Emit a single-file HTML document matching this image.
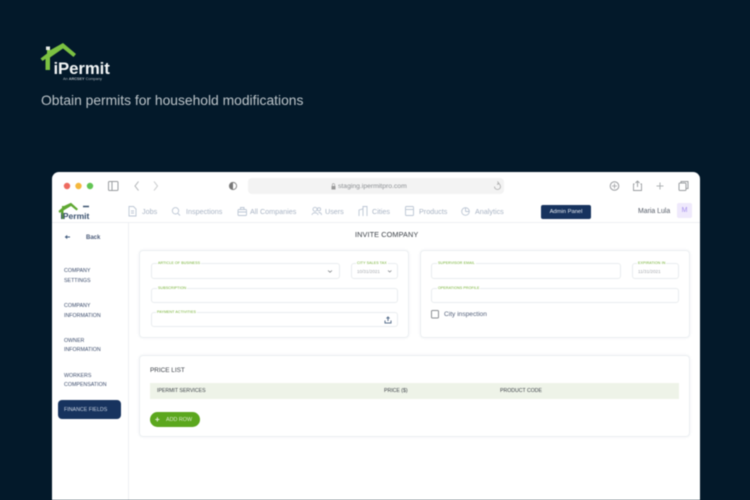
<!DOCTYPE html>
<html><head><meta charset="utf-8">
<style>
html,body{margin:0;padding:0}
body{width:750px;height:500px;overflow:hidden;background:#03192a;position:relative;font-family:"Liberation Sans",sans-serif}
.a{position:absolute;white-space:nowrap}
#win{position:absolute;left:52px;top:172px;width:648px;height:328px;background:#fff;border-radius:7px 7px 0 0;overflow:hidden}
#blur{position:absolute;left:0;top:0;width:750px;height:500px;filter:blur(.6px)}
.card{position:absolute;background:#fff;border:1px solid #eceff2;border-radius:4px;box-shadow:0 0 3px rgba(40,60,90,.06);box-sizing:border-box}
.f{position:absolute;box-sizing:border-box;border:1px solid #e9ecef;border-radius:3px;background:#fff}
.l{position:absolute;font-size:3.6px;line-height:4px;color:#6fae2c;background:#fff;padding:0 1px;white-space:nowrap;letter-spacing:.1px}
.n{position:absolute;font-size:7.2px;line-height:9px;color:#a9b4c4;white-space:nowrap}
.s{position:absolute;font-size:5.300px;line-height:6px;color:#3c4c6c;white-space:nowrap}
.v{position:absolute;font-size:4.600px;line-height:6px;color:#a5a9ae;white-space:nowrap}
.t{position:absolute;font-size:5.200px;line-height:6px;color:#3c4148;white-space:nowrap}
svg{position:absolute;overflow:visible}
</style></head><body>
<div id="blur">
<svg style="left:0;top:0" width="750" height="500">
<path d="M40.500 58.500 L47 53.500 L47 50 L50.500 50 L63 43 L76 54 L73.500 57 L63 48.500 L50 57.500 L50 70 L45.500 70 L45.500 59 L42.500 61 Z" fill="#7cc142"/>
<rect x="46" y="46.500" width="4" height="3.500" fill="#e8ece8"/>
</svg>
<div class="a" style="left:53.500px;top:57.500px;font-size:16.800px;line-height:21px;font-weight:700;color:#f2f5f5;letter-spacing:-.1px">iPermit</div>
<div class="a" style="left:63px;top:77px;font-size:3.800px;line-height:5px;color:#aeb6bb">An <b>ARCSEY</b> Company</div>
<div class="a" style="left:41px;top:92px;font-size:13.850px;line-height:16px;color:#bcc4c9">Obtain permits for household modifications</div>

<div id="win"></div>
<!-- toolbar -->
<svg style="left:0;top:0" width="750" height="500" fill="none">
<circle cx="67" cy="186" r="3.200" fill="#ee6a5f"/><circle cx="78.500" cy="186" r="3.200" fill="#f5b83d"/><circle cx="90" cy="186" r="3.200" fill="#62c554"/>
<rect x="108.500" y="181.500" width="9.500" height="9" rx="1" stroke="#9a9d a0" style="stroke:#9a9da0"/><path d="M112 182v8" stroke="#9a9da0"/>
<path d="M138.500 181.500 L135 186 L138.500 190.500" stroke="#b0b3b6"/><path d="M154 181.500 L157.500 186 L154 190.500" stroke="#c8cacc"/>
<circle cx="233" cy="186" r="3.600" stroke="#888"/><path d="M233 182.400a3.600 3.600 0 0 0 0 7.200z" fill="#777"/>
<rect x="248" y="178" width="256" height="16" rx="4" fill="#f3f3f3"/>
<path d="M494.500 186.500a3 3 0 1 0 3-3M497.500 181.500l1.500 2-2 1" stroke="#aaa" stroke-width=".8"/>
<rect x="331.500" y="186" width="4" height="3.500" fill="#999"/><path d="M332.300 186v-1.200a1.200 1.200 0 0 1 2.400 0v1.200" stroke="#999" stroke-width=".6"/>
<circle cx="614.500" cy="186" r="4.300" stroke="#9a9da0"/><path d="M614.500 183.500v5M612 186h5" stroke="#9a9da0" stroke-width=".8"/>
<path d="M634.500 184h-1v6.500h8V184h-1M637.500 187v-6M635.500 183l2-2 2 2" stroke="#9a9da0" stroke-width=".9"/>
<path d="M660 182.500v7M656.500 186h7" stroke="#b0b3b6"/>
<rect x="679" y="183" width="7" height="7.500" rx="1" stroke="#9a9da0"/><path d="M681 183v-1.500h7v7h-2" stroke="#9a9da0"/>
<!-- nav line -->
<path d="M52 222.500H700" stroke="#eef0f3"/>
<path d="M128.500 223V500" stroke="#eef0f3"/>
<!-- nav logo -->
<path d="M58.500 211 L62 208 L62 206 L64 206 L71 202.800 L78 209 L76.500 210.500 L71 206 L63.500 210.500 L63.500 219 L61 219 L61 212 L59.500 213 Z" fill="#5fa832"/>
<path d="M83 206.500h6" stroke="#39506e" stroke-width="1.500"/>
<!-- nav icons -->
<g stroke="#bcc6d4" stroke-width=".9">
<path d="M129 206.500h4.500l2.500 2.500v7h-7z"/><path d="M131 211h3M131 213h3"/>
<circle cx="175.500" cy="210.800" r="3.200"/><path d="M178 213.500l2 2"/>
<rect x="238" y="209.500" width="8.500" height="6" rx="1"/><path d="M240.500 209.500v-2h3.500v2M238 212h8.500"/>
<circle cx="315" cy="209.300" r="2"/><circle cx="319" cy="209.300" r="1.600"/><path d="M312 215c0-3 6-3 6 0M318.500 212.500c2 0 3 1 3 2.500"/>
<path d="M359 216v-6l4-1v7M363 216v-9.500h4v9.500"/>
<rect x="405.500" y="206.500" width="8" height="9" rx="1"/><path d="M405.500 209.500h8"/>
<circle cx="465.500" cy="211.500" r="3.800"/><path d="M465.500 211.500h4M465.500 207.700v3.800"/>
</g>
<!-- back arrow -->
<path d="M70 237h-4.500M67.200 235.500l-1.700 1.500 1.700 1.500" stroke="#3f5a7d"/>
</svg>

<div class="a" style="left:338px;top:182.500px;font-size:6.800px;line-height:8px;color:#8b8e92">staging.ipermitpro.com</div>

<div class="a" style="left:60.500px;top:211px;font-size:8.500px;line-height:10px;font-weight:700;color:#39506e">iPermit</div>
<div class="n" style="left:142px;top:207px">Jobs</div>
<div class="n" style="left:186px;top:207px">Inspections</div>
<div class="n" style="left:250px;top:207px">All Companies</div>
<div class="n" style="left:325px;top:207px">Users</div>
<div class="n" style="left:372px;top:207px">Cities</div>
<div class="n" style="left:419px;top:207px">Products</div>
<div class="n" style="left:475px;top:207px">Analytics</div>
<div class="a" style="left:541px;top:205px;width:50px;height:14px;background:#17335e;border-radius:2px;color:#e8edf4;font-size:5.800px;line-height:14px;text-align:center">Admin Panel</div>
<div class="a" style="left:638px;top:207px;font-size:6.900px;line-height:9px;color:#535a66">Maria Lula</div>
<div class="a" style="left:677px;top:203px;width:15px;height:15px;background:#efe9fc;border-radius:2px;color:#a892ee;font-size:7px;line-height:15px;text-align:center">M</div>

<div class="a" style="left:86px;top:233.500px;font-size:6px;line-height:8px;font-weight:700;color:#4a5a78">Back</div>
<div class="s" style="left:64px;top:267.500px">COMPANY</div><div class="s" style="left:64px;top:277.500px">SETTINGS</div>
<div class="s" style="left:64px;top:302.500px">COMPANY</div><div class="s" style="left:64px;top:312.500px">INFORMATION</div>
<div class="s" style="left:64px;top:337.500px">OWNER</div><div class="s" style="left:64px;top:347px">INFORMATION</div>
<div class="s" style="left:64px;top:372.500px">WORKERS</div><div class="s" style="left:64px;top:382px">COMPENSATION</div>
<div class="a" style="left:58px;top:400px;width:63px;height:19px;background:#17335e;border-radius:4px"></div>
<div class="s" style="left:64px;top:406.500px;color:#c8d2e0">FINANCE FIELDS</div>

<div class="a" style="left:355px;top:229.500px;font-size:7.300px;line-height:9px;color:#3c4148;letter-spacing:.1px">INVITE COMPANY</div>

<div class="card" style="left:139px;top:250px;width:270px;height:88px"></div>
<div class="card" style="left:420px;top:250px;width:270px;height:88px"></div>
<div class="card" style="left:139px;top:355px;width:551px;height:82px"></div>

<div class="f" style="left:151px;top:263px;width:189px;height:16px"></div>
<div class="l" style="left:157px;top:261px">ARTICLE OF BUSINESS</div>
<div class="f" style="left:351px;top:263px;width:47px;height:16px"></div>
<div class="l" style="left:356px;top:261px">CITY SALES TAX</div>
<div class="v" style="left:357px;top:269px">10/31/2021</div>
<div class="f" style="left:151px;top:288px;width:247px;height:15px"></div>
<div class="l" style="left:157px;top:286px">SUBSCRIPTION</div>
<div class="f" style="left:151px;top:312px;width:247px;height:15px"></div>
<div class="l" style="left:156px;top:310px">PAYMENT ACTIVITIES</div>

<div class="f" style="left:431px;top:263px;width:190px;height:16px"></div>
<div class="l" style="left:437px;top:261px">SUPERVISOR EMAIL</div>
<div class="f" style="left:632px;top:263px;width:47px;height:16px"></div>
<div class="l" style="left:637px;top:261px">EXPIRATION IN</div>
<div class="v" style="left:638px;top:269px">11/31/2021</div>
<div class="f" style="left:431px;top:288px;width:248px;height:15px"></div>
<div class="l" style="left:437px;top:286px">OPERATIONS PROFILE</div>
<div class="a" style="left:444px;top:310.500px;font-size:6.600px;line-height:8px;color:#55627c">City inspection</div>

<div class="t" style="left:150px;top:367.500px;font-size:6.400px">PRICE LIST</div>
<div class="a" style="left:150px;top:383px;width:529px;height:16px;background:#eef3e8"></div>
<div class="t" style="left:157px;top:387.500px">IPERMIT SERVICES</div>
<div class="t" style="left:384px;top:387.500px">PRICE ($)</div>
<div class="t" style="left:500px;top:387.500px">PRODUCT CODE</div>
<div class="a" style="left:150px;top:412px;width:50px;height:15px;background:#5ba71e;border-radius:8px"></div>
<div class="a" style="left:155px;top:416px;font-size:8px;line-height:7px;font-weight:700;color:#e9f3df">+</div>
<div class="a" style="left:166px;top:417px;font-size:5.400px;line-height:6px;color:#dcedcc">ADD ROW</div>

<svg style="left:0;top:0" width="750" height="500" fill="none">
<rect x="431.500" y="310.500" width="7" height="7.500" rx="1" stroke="#8d9094"/>
<path d="M328 270.500l2 1.700 2-1.700M388 270.500l1.700 1.500 1.700-1.500" stroke="#808488" stroke-width=".8"/>
<path d="M385 320.500v2.500h6v-2.500M388 321v-4M386.500 318.500l1.500-1.500 1.500 1.500" stroke="#59708e"/>
</svg>
</div>
</body></html>
